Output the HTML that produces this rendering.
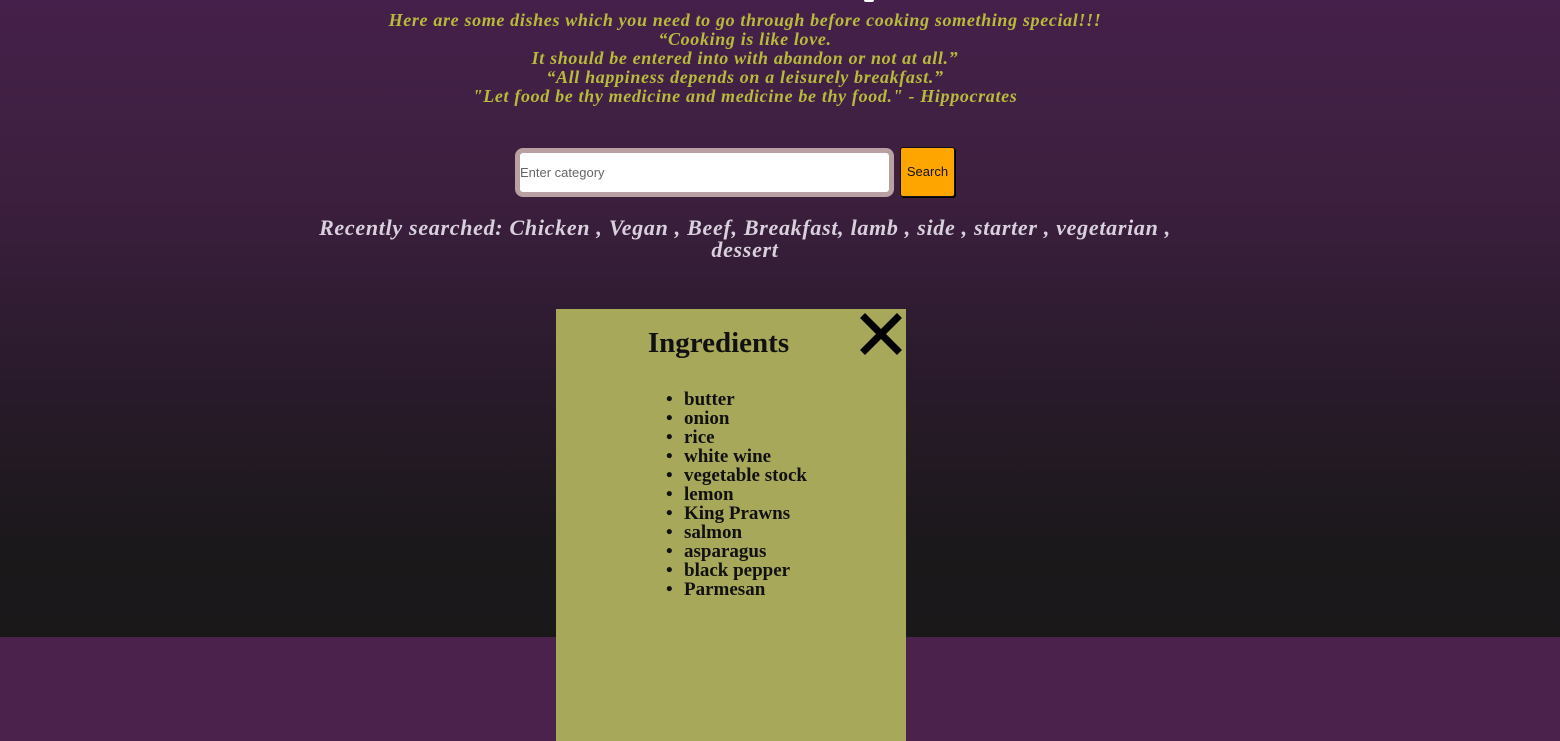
<!DOCTYPE html>
<html><head><style>
html,body{margin:0;padding:0}
body{width:1560px;height:741px;position:relative;overflow:hidden;background:#4a224c;font-family:"Liberation Serif",serif}
.bg{position:absolute;left:0;top:0;width:1560px;height:637px;background:linear-gradient(#45204a 0%,#3c1f3e 30%,#2c1b2e 55%,#1b181b 85%,#1a1819 100%)}
.q{position:absolute;left:0;width:1490px;text-align:center;color:#b7ba3a;font-style:italic;font-weight:bold;font-size:18px;line-height:19px;top:11px;letter-spacing:0.65px}
.inp{position:absolute;left:515px;top:148px;background:#fff;border:5px solid #b9a0a3;border-radius:8px;width:369px;height:39px}
.inp span{position:absolute;left:0;top:12px;font-family:"Liberation Sans",sans-serif;font-size:13px;color:#666}
.btn{position:absolute;left:900px;top:147px;width:53px;height:48px;background:#ffa500;border:1px solid #111;border-radius:3px;box-shadow:1px 1px 0 #000;font-family:"Liberation Sans",sans-serif;font-size:13px;text-align:center;line-height:48px;color:#111}
.rs{position:absolute;left:250px;width:990px;text-align:center;top:217px;color:#d8d0dc;font-style:italic;font-weight:bold;font-size:22px;line-height:22px;letter-spacing:0.7px}
.card{position:absolute;left:556px;top:309px;width:350px;height:432px;background:#a7a85a}
.card h2{margin:0;position:absolute;left:0;width:325px;text-align:center;top:18px;font-size:29px;font-weight:bold;color:#111}
.x{position:absolute;left:859px;top:313px}
ul{position:absolute;left:128px;top:81px;margin:0;padding:0;list-style:none;font-weight:bold;font-size:19px;line-height:19px;color:#111}
li:before{content:"•";position:absolute;left:-18px}
li{position:relative}
</style></head><body>
<div class="bg"></div>
<div style="position:absolute;left:864px;top:0;width:10px;height:2px;background:#fff;border-radius:0 0 4px 4px"></div>
<div class="q">Here are some dishes which you need to go through before cooking something special!!!<br>“Cooking is like love.<br>It should be entered into with abandon or not at all.”<br>“All happiness depends on a leisurely breakfast.”<br>"Let food be thy medicine and medicine be thy food." - Hippocrates</div>
<div class="inp"><span>Enter category</span></div>
<div class="btn">Search</div>
<div class="rs">Recently searched: Chicken , Vegan , Beef, Breakfast, lamb , side , starter , vegetarian ,<br>dessert</div>
<div class="card"><h2>Ingredients</h2>
<ul><li>butter</li><li>onion</li><li>rice</li><li>white wine</li><li>vegetable stock</li><li>lemon</li><li>King Prawns</li><li>salmon</li><li>asparagus</li><li>black pepper</li><li>Parmesan</li></ul></div>
<svg class="x" width="44" height="42" viewBox="0 0 44 42"><path d="M6 5 L38 37 M38 5 L6 37" stroke="#000" stroke-width="7" stroke-linecap="square"/></svg>
</body></html>
